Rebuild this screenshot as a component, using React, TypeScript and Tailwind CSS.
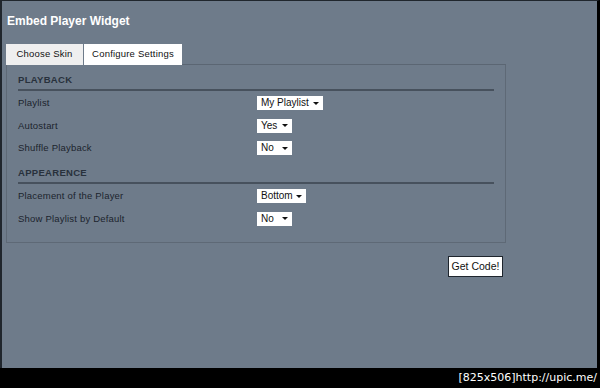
import React from 'react';

const font = { fontFamily: '"Liberation Sans", Arial, sans-serif' };

const Select: React.FC<{ value: string; width: string }> = ({ value, width }) => (
  <div className={`${width} h-[14px] bg-white flex items-center justify-between pl-[4px] pr-[4px] text-[10px] leading-none text-[#111]`}>
    <span>{value}</span>
    <span className="w-0 h-0 border-l-[3px] border-r-[3px] border-t-[3px] border-l-transparent border-r-transparent border-t-[#111]" />
  </div>
);

const Row: React.FC<{ label: string; value: string; width: string }> = ({ label, value, width }) => (
  <div className="h-[22.5px] flex items-center">
    <div className="w-[239px] text-[9.5px] tracking-[0.2px] text-[#1c242d]">{label}</div>
    <Select value={value} width={width} />
  </div>
);

const Section: React.FC<{ title: string; className?: string }> = ({ title, className = '' }) => (
  <div className={className}>
    <div className="h-[14px] leading-[14px] text-[9.5px] font-bold tracking-[0.3px] text-[#28313c]">{title}</div>
    <div className="mt-[2px] mb-[1px] h-[2px] bg-[#47515d]" />
  </div>
);

export default function App() {
  return (
    <div className="w-[600px] h-[388px] flex flex-col bg-black" style={font}>
      <div className="flex-1 bg-[#6e7b8a] border-l-2 border-t border-r-[3px] border-l-[#20262d] border-t-[#20262d] border-r-black">
        <div className="h-[43px] pl-[5px] pt-[12px] text-[12px] font-bold text-white leading-[16px]">
          Embed Player Widget
        </div>

        <div className="ml-[4px] flex items-end h-[21px]">
          <div className="w-[77px] h-[21px] bg-[#efefef] flex items-center justify-center text-[9.5px] tracking-[0.2px] text-[#111]">
            Choose Skin
          </div>
          <div className="ml-[1px] w-[98px] h-[21px] bg-white flex items-center justify-center text-[9.5px] tracking-[0.2px] text-[#111]">
            Configure Settings
          </div>
          <div className="w-[324px] border-b border-[#5b6673]" />
        </div>

        <div className="ml-[4px] w-[500px] border border-t-0 border-[#5e6976] px-[11px] pt-[8px] pb-[12px]">
          <Section title="PLAYBACK" />
          <Row label="Playlist" value="My Playlist" width="w-[66px]" />
          <Row label="Autostart" value="Yes" width="w-[35px]" />
          <Row label="Shuffle Playback" value="No" width="w-[35px]" />
          <Section title="APPEARENCE" className="mt-[6.5px]" />
          <Row label="Placement of the Player" value="Bottom" width="w-[49px]" />
          <Row label="Show Playlist by Default" value="No" width="w-[35px]" />
        </div>

        <div className="w-[500px] ml-[4px] flex justify-end pr-[3px] mt-[13px]">
          <button className="w-[55px] h-[21px] bg-white border border-[#1e252d] text-[10.5px] text-[#111] leading-none">
            Get Code!
          </button>
        </div>
      </div>
      <div className="h-[20px] flex items-center justify-end pr-[3px] text-white text-[11px]" style={{ fontFamily: '"DejaVu Sans", sans-serif' }}>
        [825x506]http://upic.me/
      </div>
    </div>
  );
}
